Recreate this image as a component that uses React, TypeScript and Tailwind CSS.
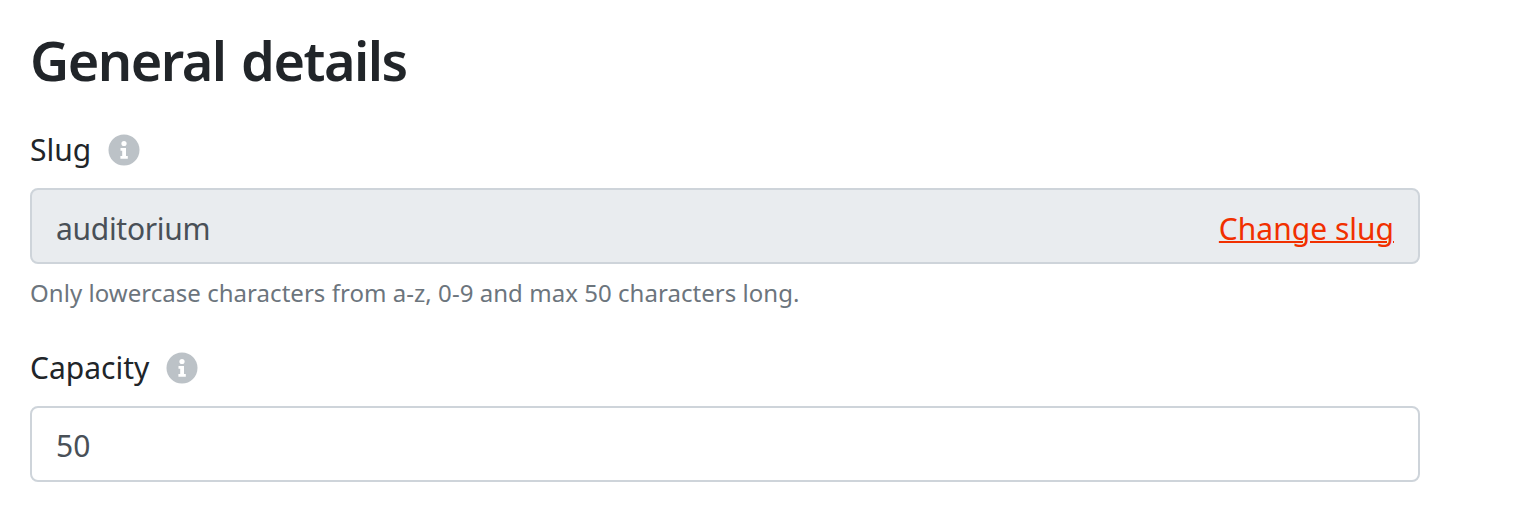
const fontStack = "font-['Noto_Sans','Open_Sans',sans-serif]";

function InfoBadge() {
  return (
    <svg viewBox="0 0 32 32" className="w-[32px] h-[32px] shrink-0" aria-hidden="true">
      <circle cx="16" cy="16" r="15.5" fill="#bcc2c7" />
      <circle cx="16" cy="9.5" r="2.6" fill="#fff" />
      <path d="M12.5 14h5.5v8h1.8v2.8h-7.4V22h1.8v-5.2h-1.7z" fill="#fff" />
    </svg>
  );
}

function FieldLabel({ text }: { text: string }) {
  return (
    <div className="flex items-center gap-[17px] h-[40px]">
      <span className="text-[30px] leading-[40px] text-[#212529]">{text}</span>
      <InfoBadge />
    </div>
  );
}

export default function App() {
  return (
    <div className={`${fontStack} w-[1513px] h-[530px] bg-white overflow-hidden pl-[30px] pt-[26px]`}>
      <h1 className="text-[54px] leading-[68px] font-semibold tracking-[-1.5px] [word-spacing:3px] text-[#212529]">General details</h1>

      <div className="mt-[36px] w-[1390px]">
        <FieldLabel text="Slug" />
        <div className="mt-[18px] flex items-center h-[76px] pl-[24px] pr-[24px] pt-[4px] rounded-[8px] border-2 border-[#ced4da] bg-[#e9ecef]">
          <input
            readOnly
            value="auditorium"
            className="flex-1 min-w-0 bg-transparent outline-none text-[30px] tracking-[-0.3px] text-[#495057]"
          />
          <a href="#" className="text-[30px] text-[#f13000] underline decoration-2">Change slug</a>
        </div>
        <p className="mt-[11px] text-[24px] leading-[36px] tracking-[0.04px] text-[#6c757d]">
          Only lowercase characters from a-z, 0-9 and max 50 characters long.
        </p>
      </div>

      <div className="mt-[37px] w-[1390px]">
        <FieldLabel text="Capacity" />
        <div className="mt-[18px] flex items-center h-[76px] pl-[24px] pr-[24px] pt-[2px] rounded-[8px] border-2 border-[#ced4da] bg-white">
          <input
            readOnly
            value="50"
            className="flex-1 min-w-0 bg-transparent outline-none text-[30px] text-[#495057]"
          />
        </div>
      </div>
    </div>
  );
}
